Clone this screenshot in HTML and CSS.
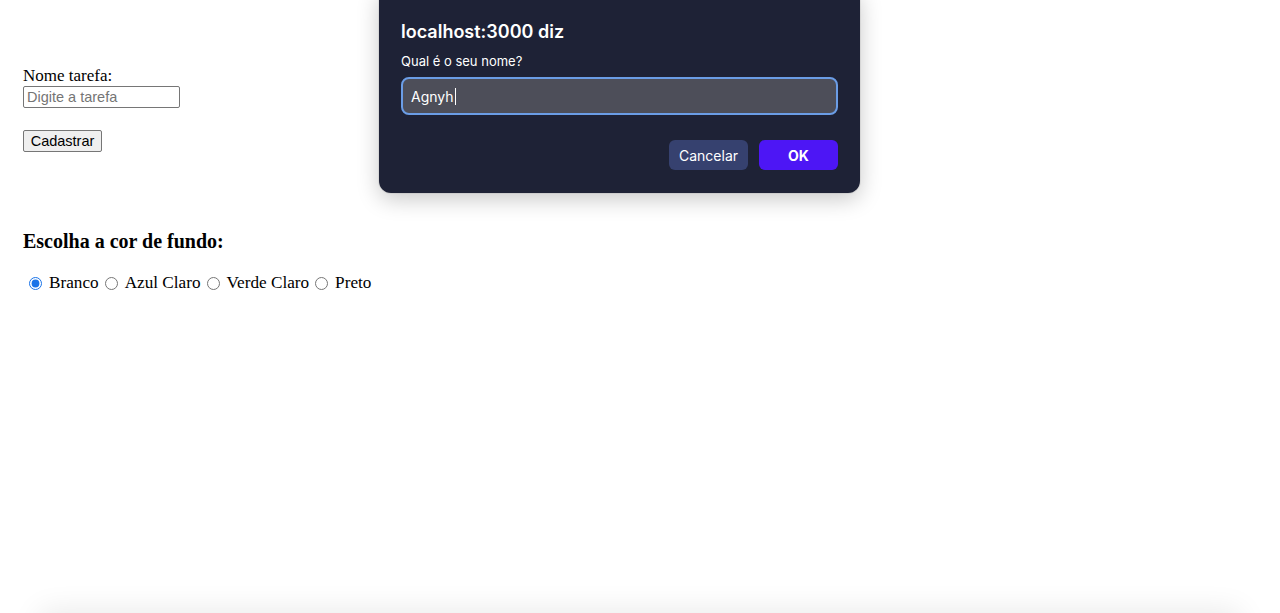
FILE: index.html
```html
<!DOCTYPE html>
<html lang="pt">
<head>
<meta charset="utf-8">
<title>Tarefas</title>
<link rel="stylesheet" href="styles.css">
</head>
<body>
<main class="page">
  <form class="task-form">
    <label class="field-label" for="tarefa">Nome tarefa:</label>
    <input class="text-input" id="tarefa" type="text" placeholder="Digite a tarefa">
    <button class="btn-submit" type="button">Cadastrar</button>
  </form>
  <h3 class="section-title">Escolha a cor de fundo:</h3>
  <div class="radio-row">
    <input class="radio" type="radio" name="cor" id="c1" checked><label for="c1">Branco</label>
    <input class="radio" type="radio" name="cor" id="c2"><label for="c2">Azul Claro</label>
    <input class="radio" type="radio" name="cor" id="c3"><label for="c3">Verde Claro</label>
    <input class="radio" type="radio" name="cor" id="c4"><label for="c4">Preto</label>
  </div>
</main>

<div class="dialog">
  <div class="dialog-title">localhost:3000 diz</div>
  <div class="dialog-msg">Qual é o seu nome?</div>
  <div class="dialog-input"><span>Agnyh</span><span class="caret"></span></div>
  <div class="dialog-actions">
    <button class="dbtn dbtn-cancel" type="button">Cancelar</button>
    <button class="dbtn dbtn-ok" type="button">OK</button>
  </div>
</div>

<div class="shade-wrap"><div class="bottom-shade"></div></div>
</body>
</html>
```
FILE: styles.css
```css
html, body {
  margin: 0;
  padding: 0;
  background: #ffffff;
  overflow: hidden;
}

body {
  font-family: "Liberation Serif", "Times New Roman", serif;
  font-size: 17px;
  color: #000;
  height: 613px;
  position: relative;
}

.page {
  padding: 65px 23px 0 23px;
}

.task-form {
  display: flex;
  flex-direction: column;
  align-items: flex-start;
}

.field-label {
  display: block;
  line-height: 21px;
  height: 21px;
}

.text-input {
  box-sizing: border-box;
  width: 157px;
  height: 22px;
  margin: 0;
  padding: 1px 3px;
  border: 1px solid #767676;
  border-radius: 2px;
  font-family: "Liberation Sans", Arial, sans-serif;
  font-size: 14.5px;
  color: #000;
}

.text-input::placeholder {
  color: #757575;
}

.btn-submit {
  box-sizing: border-box;
  margin-top: 22px;
  height: 22px;
  width: 79px;
  padding: 0;
  border: 1px solid #767676;
  border-radius: 2px;
  background: #efefef;
  font-family: "Liberation Sans", Arial, sans-serif;
  font-size: 14.5px;
  color: #000;
}

.section-title {
  margin: 78px 0 0 0;
  font-size: 20px;
  font-weight: bold;
  line-height: 23px;
}

.radio-row {
  margin-top: 20px;
  display: flex;
  align-items: center;
  line-height: 20px;
  font-size: 17.2px;
}

.radio {
  width: 13px;
  height: 13px;
  margin: 0 7px 0 6px;
  accent-color: #1a73e8;
}

.dialog {
  position: absolute;
  left: 379px;
  top: -12px;
  width: 481px;
  height: 205px;
  box-sizing: border-box;
  padding: 32px 22px 0 22px;
  background: #1e2236;
  border-radius: 12px;
  box-shadow: 0 6px 22px rgba(0, 0, 0, 0.22), 0 0 0 1px rgba(0, 0, 0, 0.06);
  font-family: Inter, "Noto Sans", sans-serif;
  color: #ffffff;
}

.dialog-title {
  font-size: 18px;
  font-weight: 600;
  line-height: 24px;
}

.dialog-msg {
  margin-top: 9px;
  font-size: 13px;
  line-height: 16px;
}

.dialog-input {
  margin-top: 8px;
  box-sizing: border-box;
  height: 38px;
  display: flex;
  align-items: center;
  padding: 0 8px;
  background: #4d4e59;
  border: 2px solid #6b9de6;
  border-radius: 8px;
  font-size: 14px;
}

.caret {
  display: inline-block;
  width: 1px;
  height: 17px;
  background: #ffffff;
  margin-left: 1px;
}

.dialog-actions {
  margin-top: 25px;
  display: flex;
  justify-content: flex-end;
  gap: 11px;
}

.dbtn {
  box-sizing: border-box;
  width: 79px;
  height: 30px;
  border: 0;
  border-radius: 6px;
  font-family: Inter, "Noto Sans", sans-serif;
  font-size: 14px;
  color: #ffffff;
}

.dbtn-cancel {
  background: #36416f;
}

.dbtn-ok {
  background: #4d16f5;
  font-weight: 700;
}

.shade-wrap {
  position: absolute;
  left: 0;
  right: 0;
  bottom: 0;
  height: 50px;
  overflow: hidden;
}

.bottom-shade {
  margin: 50px 40px 0 40px;
  height: 40px;
  box-shadow: 0 -2px 30px rgba(0, 0, 0, 0.09);
}
```
